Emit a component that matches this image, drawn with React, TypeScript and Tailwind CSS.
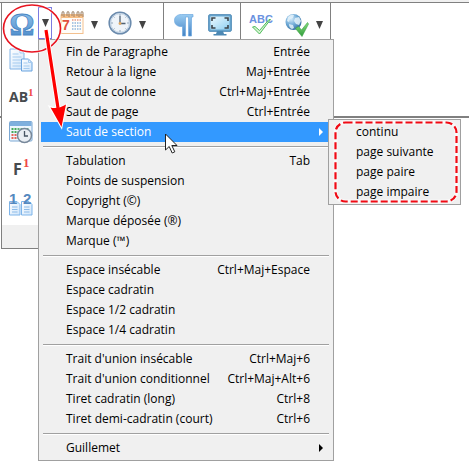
import clsx from 'clsx'

type Entry = {
  label: string
  shortcut?: string
  submenu?: boolean
  active?: boolean
}

const groups: Entry[][] = [
  [
    { label: 'Fin de Paragraphe', shortcut: 'Entrée' },
    { label: 'Retour à la ligne', shortcut: 'Maj+Entrée' },
    { label: 'Saut de colonne', shortcut: 'Ctrl+Maj+Entrée' },
    { label: 'Saut de page', shortcut: 'Ctrl+Entrée' },
    { label: 'Saut de section', submenu: true, active: true },
  ],
  [
    { label: 'Tabulation', shortcut: 'Tab' },
    { label: 'Points de suspension' },
    { label: 'Copyright (©)' },
    { label: 'Marque déposée (®)' },
    { label: 'Marque (™)' },
  ],
  [
    { label: 'Espace insécable', shortcut: 'Ctrl+Maj+Espace' },
    { label: 'Espace cadratin' },
    { label: 'Espace 1/2 cadratin' },
    { label: 'Espace 1/4 cadratin' },
  ],
  [
    { label: "Trait d'union insécable", shortcut: 'Ctrl+Maj+6' },
    { label: "Trait d'union conditionnel", shortcut: 'Ctrl+Maj+Alt+6' },
    { label: 'Tiret cadratin (long)', shortcut: 'Ctrl+8' },
    { label: 'Tiret demi-cadratin (court)', shortcut: 'Ctrl+6' },
  ],
  [{ label: 'Guillemet', submenu: true }],
]

const sectionBreaks = ['continu', 'page suivante', 'page paire', 'page impaire']

const Gradients = () => (
  <svg className="absolute size-0" aria-hidden="true">
    <defs>
      <linearGradient id="blue" x1="0" y1="0" x2="0" y2="1">
        <stop offset="0" stopColor="#9accf2" />
        <stop offset="1" stopColor="#4382c4" />
      </linearGradient>
      <linearGradient id="paper" x1="0" y1="0" x2="1" y2="1">
        <stop offset="0" stopColor="#ffffff" />
        <stop offset="1" stopColor="#cfe5fa" />
      </linearGradient>
      <linearGradient id="screen" x1="0" y1="0" x2="1" y2="1">
        <stop offset="0" stopColor="#eefaff" />
        <stop offset="1" stopColor="#8fd0f2" />
      </linearGradient>
      <linearGradient id="green" x1="0" y1="0" x2="0" y2="1">
        <stop offset="0" stopColor="#8be07f" />
        <stop offset="1" stopColor="#2f9a3b" />
      </linearGradient>
      <radialGradient id="globe" cx="0.35" cy="0.3" r="0.8">
        <stop offset="0" stopColor="#d5ecfb" />
        <stop offset="0.5" stopColor="#6ea9d6" />
        <stop offset="1" stopColor="#2a6496" />
      </radialGradient>
    </defs>
  </svg>
)

const OmegaIcon = () => (
  <svg width="24" height="24" viewBox="0 0 24 24" className="overflow-visible">
    <text x="12" y="22" textAnchor="middle" fontSize="31" fontWeight="700" fill="url(#blue)" stroke="#4a86c4" strokeWidth="0.8" className="font-['Liberation_Serif',serif]">Ω</text>
  </svg>
)

const CalendarIcon = () => (
  <svg width="24" height="24" viewBox="0 0 24 24">
    <rect x="1" y="4" width="22" height="18.5" fill="#fffdf9" stroke="#f3c08e" />
    <rect x="1" y="3" width="22" height="4" fill="#f6bd84" />
    {[3, 8, 13, 18, 22].map((x) => (
      <path key={x} d={`M${x - 1} 5V2q0-1.500 1-1.500t1 1.500v4`} fill="none" stroke="#9c8168" strokeWidth="1" />
    ))}
    <text x="2" y="19" fontSize="14" fontWeight="700" fill="#e2513e" className="font-['Liberation_Sans',sans-serif]">7</text>
    {[9, 12, 15, 18].map((y) => (
      <path key={y} d={`M12 ${y}h9`} stroke={y === 9 ? '#e69a88' : '#8fb5dc'} strokeWidth="1.500" strokeDasharray="1.500 1" />
    ))}
  </svg>
)

const ClockIcon = () => (
  <svg width="24" height="24" viewBox="0 0 24 24">
    <circle cx="12" cy="12" r="10.800" fill="#eff4f9" stroke="#6b8bad" strokeWidth="1.600" />
    <circle cx="12" cy="12" r="9.400" fill="none" stroke="#bccfe2" />
    <path d="M12 3v2M12 19v2M3 12h2M19 12h2M5.500 5.500l1 1M18.500 5.500l-1 1M5.500 18.500l1-1M18.500 18.500l-1-1" stroke="#8fa4b9" />
    <path d="M12 5v7.500h5.500" fill="none" stroke="#506274" strokeWidth="1.300" />
    <circle cx="12" cy="12.500" r="1.400" fill="#e2a85f" />
  </svg>
)

const PilcrowIcon = () => (
  <svg width="24" height="24" viewBox="0 0 24 24">
    <path d="M21 1.500H9.500C5 1.500 2.500 4 2.500 7.500s2.500 6 6.500 6h1.500V23h3V4h3v19h3V4H21z" fill="url(#blue)" stroke="#6fa9df" strokeWidth="0.700" />
  </svg>
)

const ScreenIcon = () => (
  <svg width="24" height="24" viewBox="0 0 24 24">
    <path d="M9 18h6l1 3h2.500v1.500h-13V21H8z" fill="#4c88b4" />
    <rect x="0.700" y="1.700" width="22.600" height="16.600" rx="1" fill="#6aa8d0" stroke="#4a87b4" />
    <rect x="2.500" y="3.500" width="19" height="13" fill="url(#screen)" />
    <path d="M4 8V5h3.500M16.500 5H20v3M20 12v3h-3.500M7.500 15H4v-3" fill="none" stroke="#3c444a" strokeWidth="1.600" />
  </svg>
)

const SpellcheckIcon = () => (
  <svg width="24" height="24" viewBox="0 0 24 24" className="overflow-visible">
    <text x="12" y="10" textAnchor="middle" fontSize="11" fontWeight="700" fill="#6a92e0" className="font-['Liberation_Sans',sans-serif]">ABC</text>
    <path d="M3.500 14l2.500-.5 4.500 4L20 6.500l1.500 0-11 14.500z" fill="#d6f5d2" stroke="#4fbc5b" />
  </svg>
)

const WebCheckIcon = () => (
  <svg width="24" height="24" viewBox="0 0 24 24">
    <circle cx="8.500" cy="9" r="8" fill="url(#globe)" />
    <path d="M3 4q3-3 6-2l-1 3-3 1-1 3-2-1zM10 5l4-1 2 4-2 4-3-1-2-3zM4 11l4 1 1 3-2 1q-3-1-3-5z" fill="#e4f2fa" opacity="0.850" />
    <path d="M10.500 15.500l3-2 3 3.500 6-7.500 1 1.500-6.500 12.500z" fill="url(#green)" stroke="#3aa245" strokeWidth="0.600" />
  </svg>
)

const DocumentsIcon = () => (
  <svg width="24" height="24" viewBox="0 0 24 24">
    <path d="M1 1h10l4 4v16H1z" fill="url(#paper)" stroke="#83b4e6" />
    <path d="M11 1v4h4M3.500 6h6M3.500 9h9M3.500 12h9M3.500 15h9M3.500 18h9" fill="none" stroke="#a5cbef" />
    <path d="M12.500 11h7l3.500 3.500V23H12.500z" fill="url(#paper)" stroke="#6ba4df" />
    <path d="M19.500 11v3.500H23M14.500 15h4M14.500 18h6M14.500 20.500h6" fill="none" stroke="#a5cbef" />
  </svg>
)

const EndnoteIcon = () => (
  <svg width="24" height="24" viewBox="0 0 24 24" className="overflow-visible font-['Open_Sans',sans-serif]">
    <text x="0" y="18" fontSize="14" fontWeight="700" fill="#474b4e">AB</text>
    <text x="19" y="12" fontSize="11" fontWeight="700" fill="#f04848" className="font-['Liberation_Serif',serif]">1</text>
  </svg>
)

const DateTimeIcon = () => (
  <svg width="24" height="24" viewBox="0 0 24 24">
    <rect x="0.500" y="1.500" width="22.500" height="19.500" rx="1" fill="#eef6fd" stroke="#7ba8d4" />
    <rect x="1" y="2" width="21.500" height="4" fill="#7fb0de" />
    {[9, 12, 15, 18].map((y, row) => (
      <g key={y} strokeWidth="2" strokeDasharray="2 1">
        <path d={`M2.500 ${y}h5`} stroke={row < 2 ? '#46a95c' : '#e46558'} />
        <path d={`M8.500 ${y}h12`} stroke={row < 2 ? '#5fb574' : '#7fae8a'} />
      </g>
    ))}
    <circle cx="15.500" cy="15.500" r="7" fill="#e9eef4" stroke="#78889a" strokeWidth="1.500" />
    <path d="M15.500 11v5h3.500" fill="none" stroke="#465463" strokeWidth="1.300" />
  </svg>
)

const FootnoteIcon = () => (
  <svg width="24" height="24" viewBox="0 0 24 24" className="overflow-visible font-['Open_Sans',sans-serif]">
    <text x="4" y="19" fontSize="16" fontWeight="700" fill="#474b4e">F</text>
    <text x="14" y="11" fontSize="13" fontWeight="700" fill="#f04848" className="font-['Liberation_Serif',serif]">1</text>
  </svg>
)

const PageNumberIcon = () => (
  <svg width="24" height="24" viewBox="0 0 24 24" className="overflow-visible">
    {[0, 12].map((x) => (
      <g key={x} transform={`translate(${x} 0)`}>
        <path d="M0.500 9.500H8l3 3v10.500H0.500z" fill="url(#paper)" stroke="#7fb5ea" />
        <path d="M3 15h5.500M3 17.500h5.500M3 20h5.500" stroke="#8dbbe8" />
      </g>
    ))}
    <g fontSize="15" fontWeight="700" fill="#5489c0" className="font-['Liberation_Sans',sans-serif]">
      <text x="0" y="12">1</text>
      <text x="14" y="12">2</text>
    </g>
  </svg>
)

const DropArrow = () => (
  <svg width="7" height="8" viewBox="0 0 7 8">
    <path d="M0 0h7L3.500 8z" fill="#444" />
  </svg>
)

const ToolButton = ({ label, className, children }: { label: string; className?: string; children: React.ReactNode }) => (
  <button type="button" aria-label={label} className={clsx('flex items-center justify-center', className)}>
    {children}
  </button>
)

const Divider = () => <div className="w-px bg-[#808080]" />

const Toolbar = () => (
  <div role="toolbar" className="flex h-9 items-stretch">
    <ToolButton label="Caractères spéciaux" className="w-9 pl-1 pt-2"><OmegaIcon /></ToolButton>
    <ToolButton label="Choisir un caractère" className="mt-1 w-[14px] border border-[#7b7be0]"><DropArrow /></ToolButton>
    <ToolButton label="Date" className="ml-2 w-6 pt-1"><CalendarIcon /></ToolButton>
    <ToolButton label="Choisir une date" className="w-5 pt-2"><DropArrow /></ToolButton>
    <ToolButton label="Heure" className="ml-1 w-6 pt-1"><ClockIcon /></ToolButton>
    <ToolButton label="Choisir une heure" className="w-5 pt-2"><DropArrow /></ToolButton>
    <div className="w-[11px]" />
    <Divider />
    <ToolButton label="Marques de paragraphe" className="ml-2 w-6 pt-2"><PilcrowIcon /></ToolButton>
    <ToolButton label="Plein écran" className="ml-3 mr-2 w-6 pt-2"><ScreenIcon /></ToolButton>
    <Divider />
    <ToolButton label="Orthographe" className="ml-2 w-6 pt-2"><SpellcheckIcon /></ToolButton>
    <ToolButton label="Langue" className="ml-3 w-6 pt-2"><WebCheckIcon /></ToolButton>
    <ToolButton label="Choisir une langue" className="w-5 pt-2"><DropArrow /></ToolButton>
    <div className="w-px" />
    <Divider />
  </div>
)

const Palette = () => (
  <div className="flex w-[37px] flex-col border-b border-[#808080] bg-white">
    <ToolButton label="Documents" className="h-9"><DocumentsIcon /></ToolButton>
    <ToolButton label="Note de fin" className="h-9"><EndnoteIcon /></ToolButton>
    <ToolButton label="Date et heure" className="h-9"><DateTimeIcon /></ToolButton>
    <ToolButton label="Note de bas de page" className="h-9"><FootnoteIcon /></ToolButton>
    <ToolButton label="Numéro de page" className="h-9"><PageNumberIcon /></ToolButton>
    <div className="mt-[3px] h-[23px] bg-[#f0f0f0]" />
  </div>
)

const MenuItem = ({ label, shortcut, submenu, active }: Entry) => (
  <button
    type="button"
    role="menuitem"
    className={clsx(
      'flex h-5 w-full items-center whitespace-nowrap pl-[25px] text-left',
      submenu ? 'pr-2' : 'pr-[21px]',
      active && 'bg-[#3399ff] text-white',
    )}
  >
    <span className="flex-1">{label}</span>
    {shortcut && <span>{shortcut}</span>}
    {submenu && (
      <svg width="4" height="8" viewBox="0 0 4 8">
        <path d="M0 0l4 4-4 4z" fill="currentColor" />
      </svg>
    )}
  </button>
)

const Menu = () => (
  <div role="menu" className="absolute left-[38px] top-[39px] w-[296px] border border-[#a0a0a0] bg-[#f0f0f0] p-[2px]">
    {groups.map((group, i) => (
      <div key={i}>
        {i > 0 && <div className="mx-[2px] my-1 h-px bg-[#a0a0a0] shadow-[0_1px_0_#fff]" />}
        {group.map((entry) => <MenuItem key={entry.label} {...entry} />)}
      </div>
    ))}
  </div>
)

const Submenu = () => (
  <div role="menu" className="absolute left-[328px] top-[119px] w-[133px] border border-[#a0a0a0] bg-[#f0f0f0] p-[2px]">
    {sectionBreaks.map((label) => <MenuItem key={label} label={label} />)}
  </div>
)

// hand-drawn marks and mouse pointer shown over the menus
const Annotations = () => (
  <svg width="469" height="471" viewBox="0 0 469 471" fill="none" className="pointer-events-none absolute left-0 top-0">
    <ellipse cx="32" cy="28.500" rx="28.500" ry="23.500" stroke="#fff" strokeWidth="3" strokeOpacity="0.700" />
    <ellipse cx="32" cy="28.500" rx="28.500" ry="23.500" stroke="#e81420" strokeWidth="1.600" />
    <path d="M46 30l12 78" stroke="#fff" strokeWidth="5" />
    <path d="M61.500 127L50 107q7 3 16-2z" fill="#fff" stroke="#fff" strokeWidth="2" />
    <path d="M46 30l12 78" stroke="#fe0000" strokeWidth="3.200" />
    <path d="M61.500 127L50.500 107.500q7 2 15.500-3z" fill="#fe0000" />
    <rect x="335.500" y="122.500" width="121" height="79" rx="10" stroke="#fff" strokeWidth="4" strokeOpacity="0.600" />
    <rect x="335.500" y="122.500" width="121" height="79" rx="10" stroke="#f00a14" strokeWidth="2.200" strokeDasharray="7 3" />
    <path d="M165.500 134v16l3.700-3.500 3 6.500 2.600-1.200-3-6.300h5.200z" fill="#fff" stroke="#222" />
  </svg>
)

export default function App() {
  return (
    <div className="relative min-h-screen overflow-hidden bg-white font-['Open_Sans','Noto_Sans',sans-serif] text-[12px] leading-5 text-black">
      <Gradients />
      <div className="absolute inset-x-0 top-[116px] h-[2px] bg-[#808080]" />
      <div className="h-[3px] border-b border-[#808080] bg-[#f0f0f0]" />
      <div className="relative ml-px flex flex-col items-start">
        <div className="border-l border-[#808080] bg-white">
          <Toolbar />
        </div>
        <div className="border-l border-[#808080] bg-white pt-[3px]">
          <Palette />
        </div>
      </div>
      <Menu />
      <Submenu />
      <Annotations />
    </div>
  )
}
